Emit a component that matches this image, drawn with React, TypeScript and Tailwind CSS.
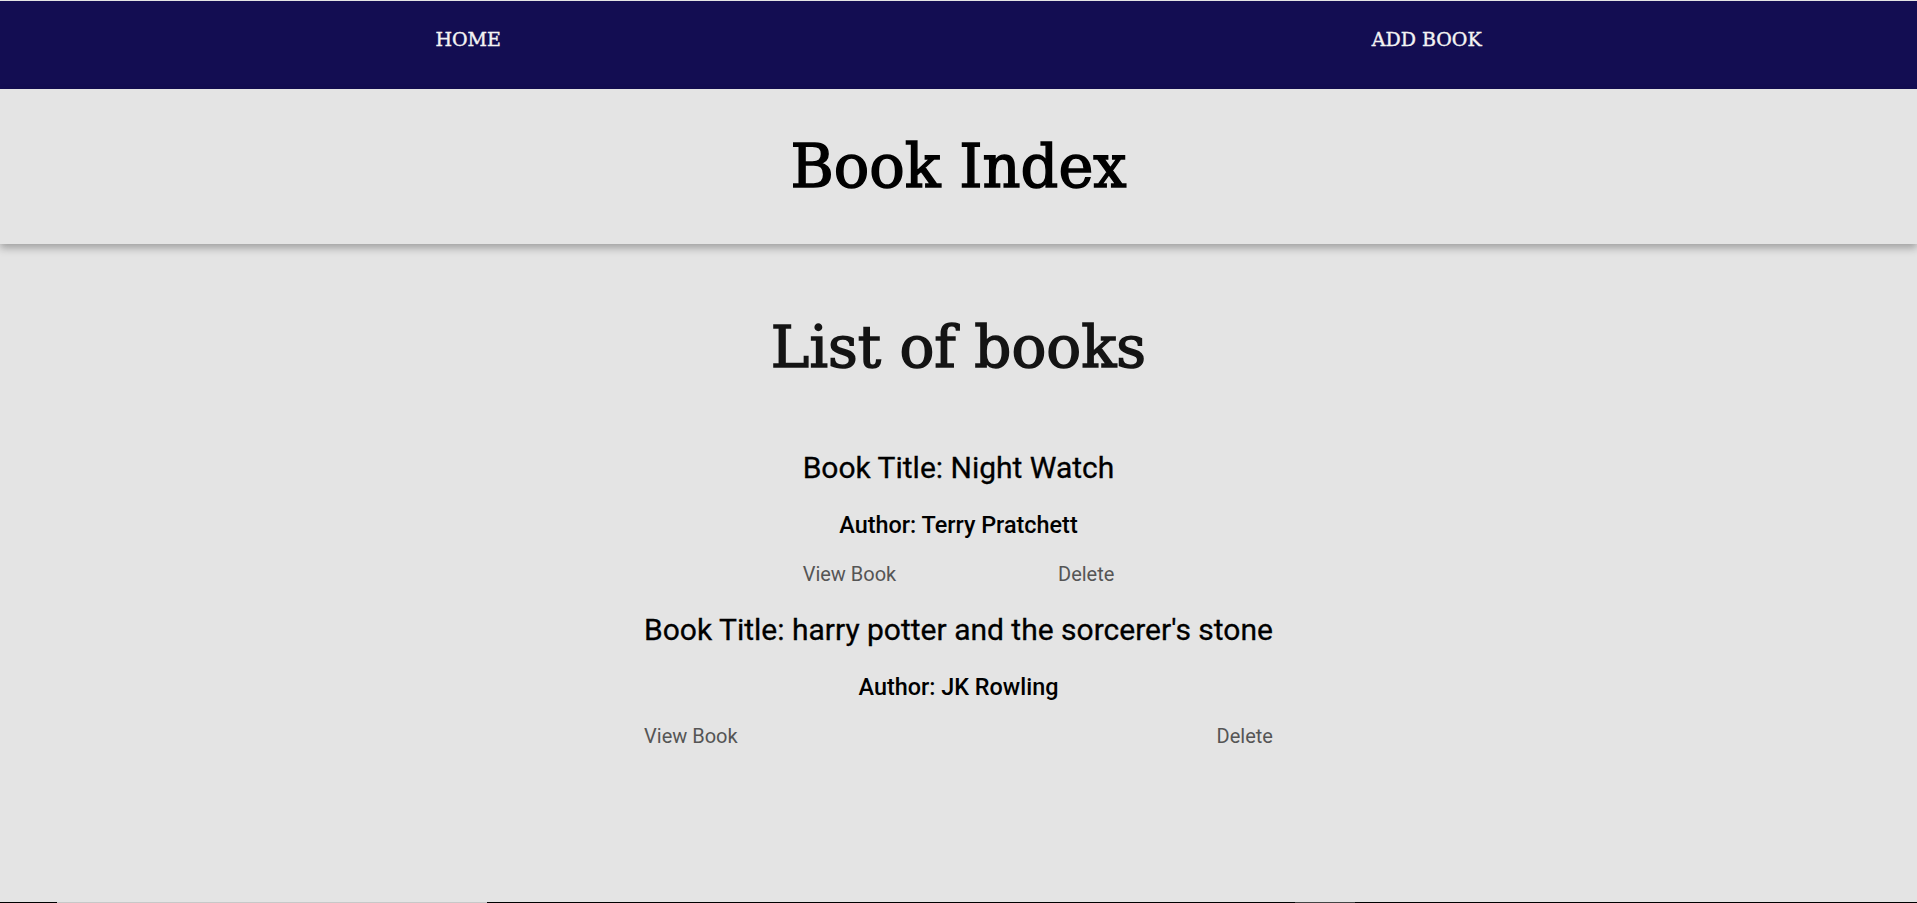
const books = [
  { title: 'Night Watch', author: 'Terry Pratchett' },
  { title: "harry potter and the sorcerer's stone", author: 'JK Rowling' },
];

const serif = "font-['DejaVu_Serif','Liberation_Serif',serif]";

function BookItem({ title, author }: { title: string; author: string }) {
  return (
    <div className="flex w-fit flex-col items-stretch text-center">
      <h2 className="text-[30px] font-normal leading-[36px] text-black [-webkit-text-stroke:0.3px_black]">Book Title: {title}</h2>
      <h3 className="mt-[25px] text-[23.4px] font-medium leading-[28px] text-black">Author: {author}</h3>
      <div className="mt-[23px] flex justify-between text-[20px] leading-[24px] text-[#555555]">
        <a href="#">View Book</a>
        <a href="#">Delete</a>
      </div>
    </div>
  );
}

export default function App() {
  return (
    <div className="flex h-[903px] flex-col bg-[#e4e4e4] font-['Roboto','Liberation_Sans',sans-serif]">
      <div className="h-px bg-[#e4e4e4]" />
      <nav className={`flex h-[88px] justify-around bg-[#130d52] pt-[26px] text-[19px] leading-[24px] text-[#f3f3f3] [-webkit-text-stroke:0.4px_#f3f3f3] ${serif}`}>
        <a href="#">HOME</a>
        <a href="#">ADD BOOK</a>
      </nav>

      <header className="relative z-10 flex h-[155px] items-center justify-center bg-[#e4e4e4] shadow-[0_4px_8px_rgba(0,0,0,0.3)]">
        <h1 className={`text-[59px] font-normal leading-[72px] text-black [-webkit-text-stroke:1.5px_black] ${serif}`}>Book Index</h1>
      </header>

      <main className="flex flex-1 flex-col items-center pt-[67px]">
        <h1 className={`text-[58px] font-normal leading-[72px] text-[#141414] [-webkit-text-stroke:1.5px_#141414] ${serif}`}>List of books</h1>
        <div className="mt-[67px] flex flex-col items-center gap-[26px]">
          {books.map((b) => (
            <BookItem key={b.title} title={b.title} author={b.author} />
          ))}
        </div>
      </main>

      <div className="flex h-px">
        <div className="w-[57px] bg-black" />
        <div className="w-[430px] bg-[#c8c8c8]" />
        <div className="w-[808px] bg-black" />
        <div className="w-[60px] bg-[#444444]" />
        <div className="flex-1 bg-black" />
      </div>
    </div>
  );
}
